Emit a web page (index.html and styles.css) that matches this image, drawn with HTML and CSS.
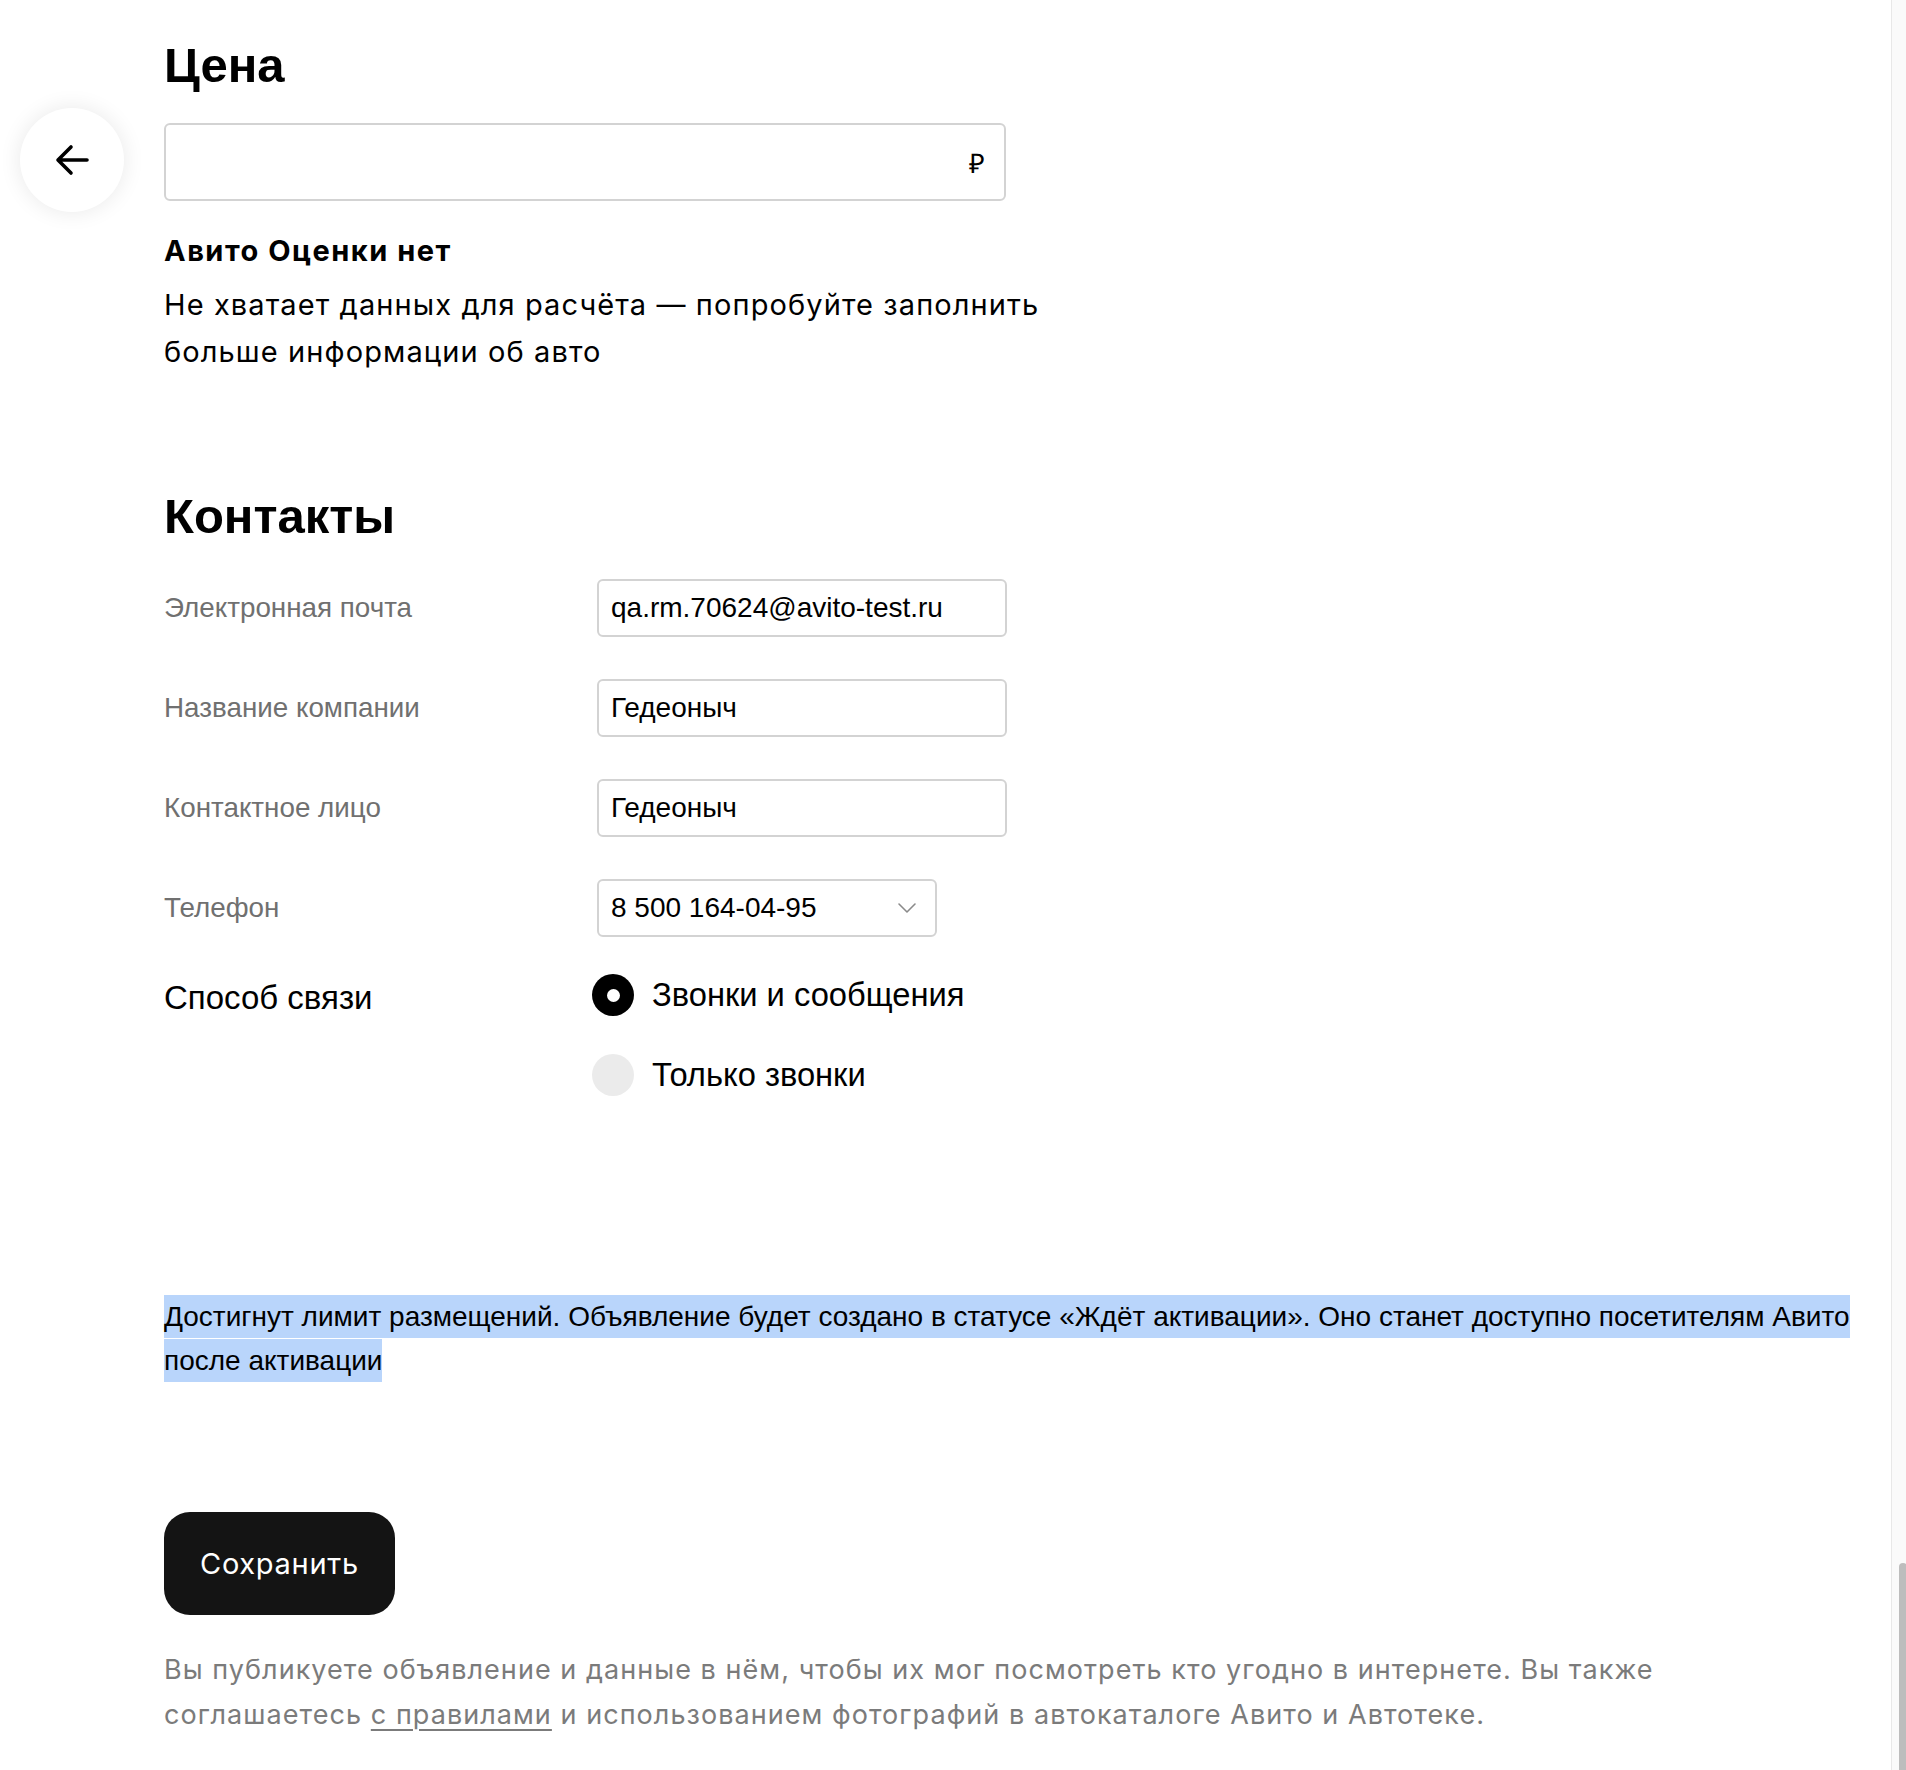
FILE: index.html
```html
<!DOCTYPE html>
<html lang="ru">
<head>
<meta charset="utf-8">
<title>Цена и контакты</title>
<link rel="stylesheet" href="styles.css">
</head>
<body>
<button class="back" type="button" aria-label="Назад">
  <svg width="40" height="40" viewBox="0 0 40 40"><path d="M35 20H7M19 7L6 20L19 33" fill="none" stroke="#000" stroke-width="3.6" stroke-linecap="round" stroke-linejoin="round"/></svg>
</button>
<main class="page">
  <section class="price">
    <h2 class="title">Цена</h2>
    <div class="price-input"><span class="rub">₽</span></div>
    <div class="estimate">
      <div class="estimate-title">Авито Оценки нет</div>
      <p class="estimate-text">Не хватает данных для расчёта — попробуйте заполнить<br>больше информации об авто</p>
    </div>
  </section>
  <section class="contacts">
    <h2 class="title">Контакты</h2>
    <div class="rows">
      <div class="row"><div class="label">Электронная почта</div><div class="field">qa.rm.70624@avito-test.ru</div></div>
      <div class="row"><div class="label">Название компании</div><div class="field">Гедеоныч</div></div>
      <div class="row"><div class="label">Контактное лицо</div><div class="field">Гедеоныч</div></div>
      <div class="row"><div class="label">Телефон</div><div class="field select"><span>8 500 164-04-95</span><svg width="20" height="12" viewBox="0 0 20 12"><path d="M2 2l8 8 8-8" fill="none" stroke="#8a8a8a" stroke-width="1.6" stroke-linecap="round" stroke-linejoin="round"/></svg></div></div>
    </div>
    <div class="method">
      <div class="method-label">Способ связи</div>
      <div class="radios">
        <div class="radio"><span class="dot checked"></span><span>Звонки и сообщения</span></div>
        <div class="radio"><span class="dot"></span><span>Только звонки</span></div>
      </div>
    </div>
  </section>
  <p class="limit"><span class="sel">Достигнут лимит размещений. Объявление будет создано в статусе «Ждёт активации». Оно станет доступно посетителям Авито после активации</span></p>
  <button class="save" type="button">Сохранить</button>
  <p class="legal">Вы публикуете объявление и данные в нём, чтобы их мог посмотреть кто угодно в интернете. Вы также<br>соглашаетесь <a href="#">с правилами</a> и использованием фотографий в автокаталоге Авито и Автотеке.</p>
</main>
<div class="scrollbar"><div class="thumb"></div></div>
</body>
</html>
```
FILE: styles.css
```css
* { box-sizing: border-box; }
html, body { margin: 0; padding: 0; background: #fff; }
body {
  font-family: "Liberation Sans", Arial, sans-serif;
  color: #000;
  width: 1891px;
  height: 1770px;
  overflow: hidden;
}
.page {
  padding: 37px 30px 0 164px;
}
.title {
  margin: 0;
  font-size: 49px;
  line-height: 56px;
  font-weight: 700;
}
.price-input {
  margin-top: 30px;
  width: 842px;
  height: 78px;
  border: 2px solid #d3d3d3;
  border-radius: 6px;
  display: flex;
  align-items: center;
  justify-content: flex-end;
  padding-right: 19px;
}
.rub { font-size: 27px; }
.estimate { margin-top: 26px; font-family: Inter, "Noto Sans", sans-serif; }
.estimate-title { font-size: 29px; line-height: 48px; font-weight: 700; letter-spacing: 1.5px; }
.estimate-text { margin: 6px 0 0; font-size: 29px; line-height: 47px; letter-spacing: 1.1px; }
.contacts { margin-top: 113px; }
.rows { margin-top: 35px; display: flex; flex-direction: column; gap: 42px; }
.row { display: flex; align-items: center; }
.label { width: 433px; font-size: 27.8px; color: #707070; }
.field {
  width: 410px;
  height: 58px;
  border: 2px solid #d3d3d3;
  border-radius: 6px;
  padding: 0 12px;
  display: flex;
  align-items: center;
  font-size: 28px;
}
.field.select { width: 340px; justify-content: space-between; padding-right: 18px; }
.method { margin-top: 34px; display: flex; }
.method-label { width: 433px; font-size: 33px; line-height: 48px; padding-top: 3px; }
.radios { margin-left: -5px; display: flex; flex-direction: column; gap: 32px; }
.radio { display: flex; align-items: center; height: 48px; gap: 18px; font-size: 32.7px; }
.dot { width: 42px; height: 42px; border-radius: 50%; background: #ebebeb; flex: none; }
.dot.checked { background: #000; display: flex; align-items: center; justify-content: center; }
.dot.checked::after { content: ""; width: 13px; height: 13px; border-radius: 50%; background: #fff; }
.limit { margin: 196px 0 0; font-size: 28px; line-height: 44px; max-width: 1720px; }
.sel { background: #b9d5fb; padding: 6px 0; -webkit-box-decoration-break: clone; box-decoration-break: clone; }
.save {
  margin-top: 129px;
  height: 103px;
  padding: 0 36px;
  border: 0;
  border-radius: 26px;
  background: #141414;
  color: #fff;
  font-family: Inter, "Noto Sans", sans-serif;
  font-size: 29px;
  letter-spacing: 0.7px;
  display: block;
}
.legal {
  margin: 32px 0 0;
  font-family: Inter, "Noto Sans", sans-serif;
  font-size: 27px;
  letter-spacing: 1.05px;
  line-height: 45px;
  color: #7b7b7b;
}
.legal a { color: #7b7b7b; text-decoration: underline; text-underline-offset: 5px; text-decoration-thickness: 2px; }
.back {
  position: absolute;
  left: 20px;
  top: 108px;
  width: 104px;
  height: 104px;
  border-radius: 50%;
  border: 0;
  background: #fff;
  box-shadow: 0 0 22px rgba(0,0,0,0.09);
  display: flex;
  align-items: center;
  justify-content: center;
  padding: 0;
}
.scrollbar {
  position: fixed;
  top: 0;
  right: 0;
  width: 15px;
  height: 100%;
  background: #fafafa;
  border-left: 1px solid #e8e8e8;
}
.thumb {
  position: absolute;
  top: 1563px;
  left: 7px;
  width: 8px;
  bottom: 0;
  background: #bdbdbd;
  border-radius: 5px 5px 0 0;
}
```
